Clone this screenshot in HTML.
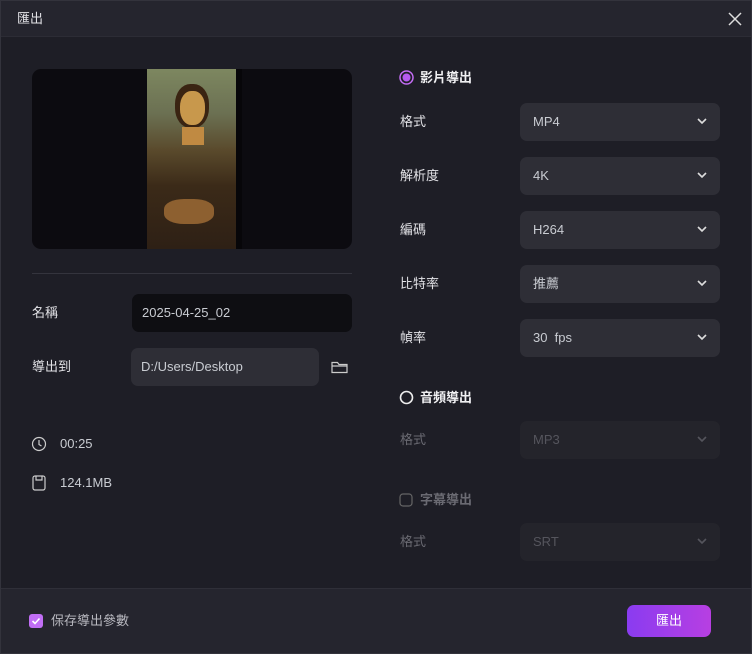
<!DOCTYPE html><html><head><meta charset="utf-8"><style>
*{margin:0;padding:0;box-sizing:border-box}
body{width:752px;height:654px;background:#1e1e26;font-family:"Liberation Sans","Noto Sans CJK TC",sans-serif;color:#e6e6ea;font-size:13px;line-height:16px;position:relative;overflow:hidden}
.a{position:absolute}
.hdr{left:0;top:0;width:752px;height:37px;background:#25252e;border-bottom:1px solid #2c2c35}
.lbl{font-size:13px;color:#e2e2e6}
.dd{left:520px;width:200px;height:38px;background:#2e2e36;border-radius:7px;padding-left:13px;line-height:38px;color:#c9ccd2;font-size:13px}
.dd svg{position:absolute;right:13px;top:15px}
.dis{background:#24242b;color:#55555d}
.foot{left:0;top:588px;width:752px;height:66px;background:#25252e;border-top:1px solid #2f2f38}
</style></head><body>
<div class="a hdr"></div>
<div class="a lbl" style="left:17px;top:11px">匯出</div>
<svg class="a" style="left:728px;top:12px" width="14" height="14"><path d="M1 1L13 13M13 1L1 13" stroke="#ddd" stroke-width="1.5"/></svg>

<div class="a" style="left:32px;top:69px;width:320px;height:180px;background:#0c0b10;border-radius:9px;overflow:hidden">
<div class="a" style="left:115px;top:0;width:95px;height:180px;background:#070609"></div>
<div class="a" style="left:115px;top:0;width:89px;height:180px;background:linear-gradient(180deg,#7d8760 0%,#6b7052 25%,#5a4a2c 45%,#3b2a18 65%,#2e2015 100%)"></div>
<div class="a" style="left:143px;top:15px;width:34px;height:44px;border-radius:45%;background:#3a2412"></div>
<div class="a" style="left:148px;top:22px;width:25px;height:34px;border-radius:45%;background:#c8984c"></div>
<div class="a" style="left:150px;top:58px;width:22px;height:18px;background:#c08a42"></div>
<div class="a" style="left:132px;top:130px;width:50px;height:25px;border-radius:40%;background:#8d6030"></div>
</div>
<div class="a" style="left:32px;top:273px;width:320px;height:1px;background:#34343d"></div>
<div class="a lbl" style="left:32px;top:305px">名稱</div>
<div class="a" style="left:132px;top:294px;width:220px;height:38px;background:#0e0e12;border-radius:7px;padding-left:10px;line-height:38px;color:#c9ccd2">2025-04-25_02</div>
<div class="a lbl" style="left:32px;top:359px">導出到</div>
<div class="a" style="left:131px;top:348px;width:188px;height:38px;background:#2e2e36;border-radius:7px;padding-left:10px;line-height:38px;color:#c9ccd2">D:/Users/Desktop</div>
<svg class="a" style="left:331px;top:360px" width="17" height="14"><path d="M1 2.5V12.5H16V4.5H8L6.5 2.5Z M1 6H16" fill="none" stroke="#ccc" stroke-width="1.2"/></svg>
<svg class="a" style="left:31px;top:436px" width="16" height="16"><circle cx="8" cy="8" r="6.5" fill="none" stroke="#ccc" stroke-width="1.2"/><path d="M8 4V8.5L10.5 10" fill="none" stroke="#ccc" stroke-width="1.2"/></svg>
<div class="a" style="left:60px;top:436px;color:#c9ccd2">00:25</div>
<svg class="a" style="left:32px;top:475px" width="15" height="17"><rect x="1" y="1" width="12" height="14" rx="2" fill="none" stroke="#ccc" stroke-width="1.2"/><path d="M4 1V5H10V1" fill="none" stroke="#ccc" stroke-width="1.2"/></svg>
<div class="a" style="left:60px;top:475px;color:#c9ccd2">124.1MB</div>

<svg class="a" style="left:399px;top:70px" width="15" height="15"><circle cx="7.5" cy="7.5" r="6.5" fill="none" stroke="#c46df5" stroke-width="1.5"/><circle cx="7.5" cy="7.5" r="4" fill="#b75af0"/></svg>
<div class="a" style="left:420px;top:70px;font-weight:bold;color:#f0f0f2">影片導出</div>
<div class="a lbl" style="left:400px;top:114px">格式</div>
<div class="a dd" style="top:103px">MP4<svg width="10" height="7"><path d="M1 1L5 5L9 1" fill="none" stroke="#ddd" stroke-width="1.6"/></svg></div>
<div class="a lbl" style="left:400px;top:168px">解析度</div>
<div class="a dd" style="top:157px">4K<svg width="10" height="7"><path d="M1 1L5 5L9 1" fill="none" stroke="#ddd" stroke-width="1.6"/></svg></div>
<div class="a lbl" style="left:400px;top:222px">編碼</div>
<div class="a dd" style="top:211px">H264<svg width="10" height="7"><path d="M1 1L5 5L9 1" fill="none" stroke="#ddd" stroke-width="1.6"/></svg></div>
<div class="a lbl" style="left:400px;top:276px">比特率</div>
<div class="a dd" style="top:265px">推薦<svg width="10" height="7"><path d="M1 1L5 5L9 1" fill="none" stroke="#ddd" stroke-width="1.6"/></svg></div>
<div class="a lbl" style="left:400px;top:330px">幀率</div>
<div class="a dd" style="top:319px">30&nbsp; fps<svg width="10" height="7"><path d="M1 1L5 5L9 1" fill="none" stroke="#ddd" stroke-width="1.6"/></svg></div>

<svg class="a" style="left:399px;top:390px" width="15" height="15"><circle cx="7.5" cy="7.5" r="6" fill="none" stroke="#eee" stroke-width="1.6"/></svg>
<div class="a" style="left:420px;top:390px;font-weight:bold;color:#f0f0f2">音頻導出</div>
<div class="a lbl" style="left:400px;top:432px;color:#6a6a72">格式</div>
<div class="a dd dis" style="top:421px">MP3<svg width="10" height="7"><path d="M1 1L5 5L9 1" fill="none" stroke="#55555d" stroke-width="1.6"/></svg></div>
<svg class="a" style="left:399px;top:493px" width="14" height="14"><rect x="1" y="1" width="12" height="12" rx="3" fill="none" stroke="#666" stroke-width="1.2"/></svg>
<div class="a" style="left:420px;top:492px;font-weight:bold;color:#6a6a72">字幕導出</div>
<div class="a lbl" style="left:400px;top:534px;color:#6a6a72">格式</div>
<div class="a dd dis" style="top:523px">SRT<svg width="10" height="7"><path d="M1 1L5 5L9 1" fill="none" stroke="#55555d" stroke-width="1.6"/></svg></div>

<div class="a foot"></div>
<svg class="a" style="left:29px;top:614px" width="14" height="14"><rect width="14" height="14" rx="3" fill="#c16ef5"/><path d="M3.5 7L6 9.5L10.5 4.5" fill="none" stroke="#fff" stroke-width="1.6"/></svg>
<div class="a" style="left:51px;top:613px;color:#b9b9c0">保存導出參數</div>
<div class="a" style="left:627px;top:605px;width:84px;height:32px;border-radius:7px;background:linear-gradient(90deg,#8a3cf0,#b73fe2);color:#fff;text-align:center;line-height:32px">匯出</div>
<div class="a" style="left:0;top:0;width:752px;height:654px;border:1px solid #33333c;pointer-events:none"></div>
</body></html>
